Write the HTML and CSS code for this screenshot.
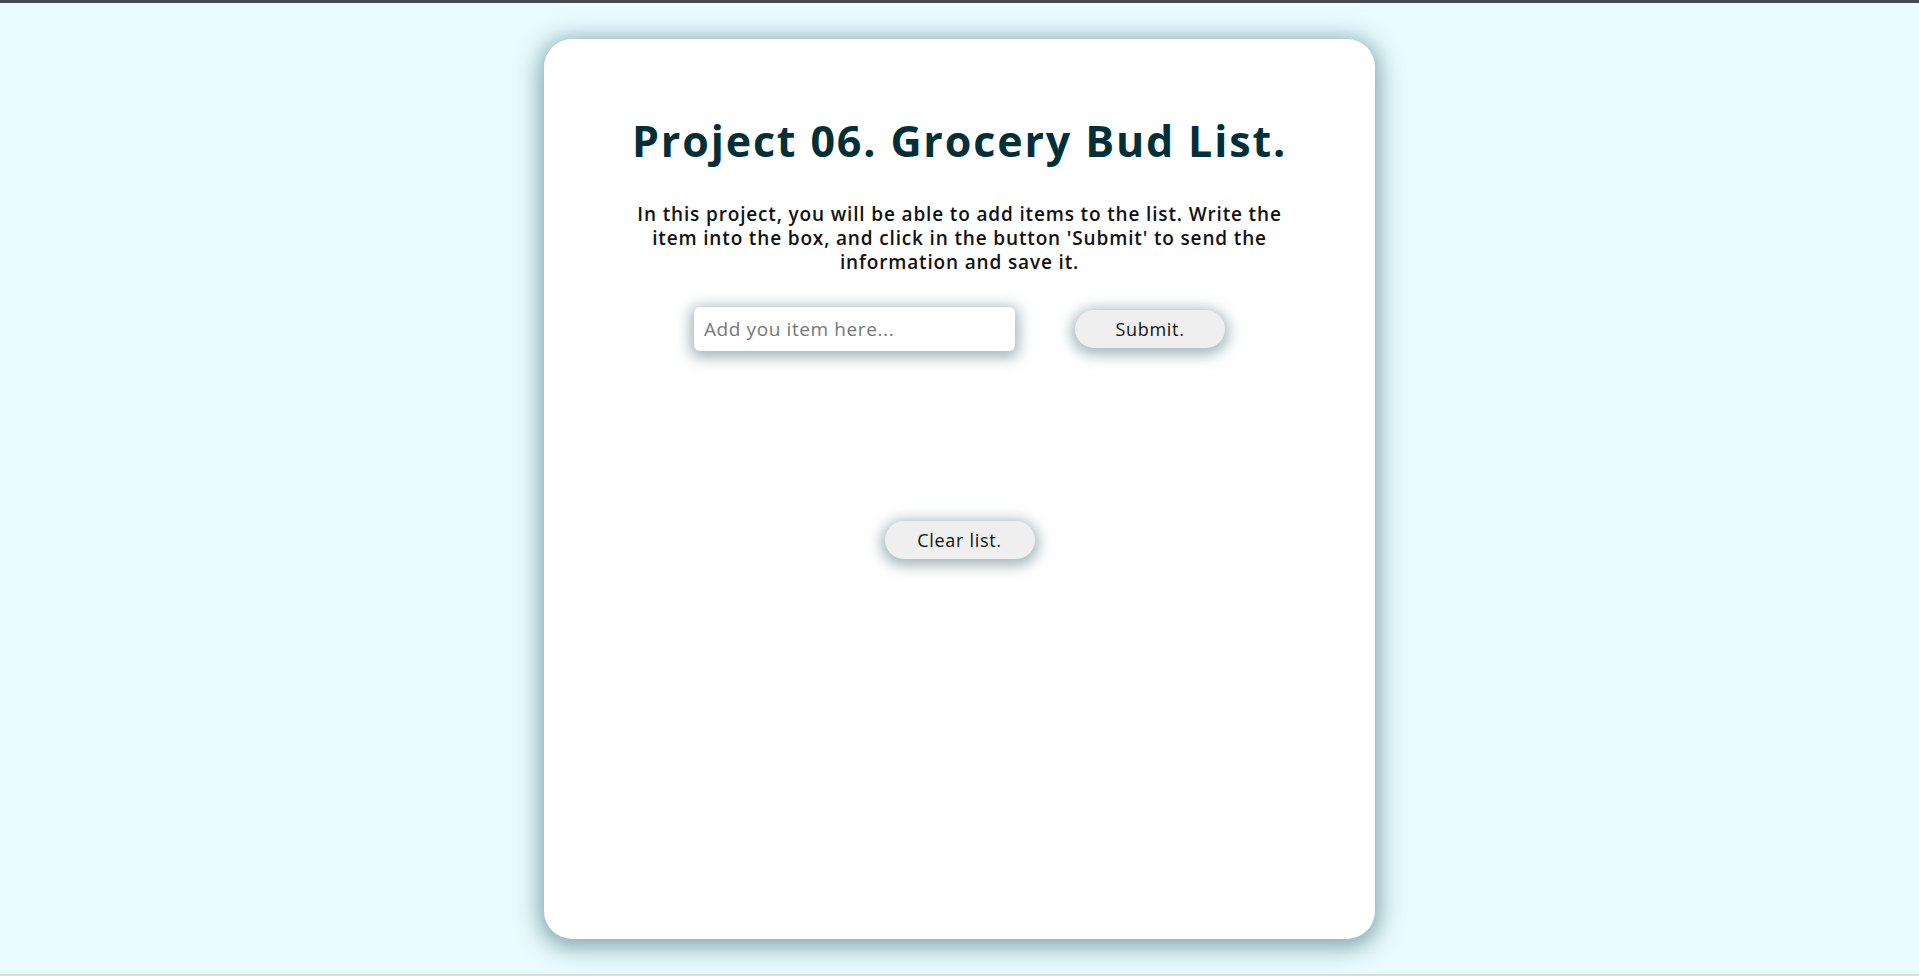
FILE: index.html
```html
<!DOCTYPE html>
<html lang="en">
<head>
<meta charset="utf-8">
<title>Grocery Bud</title>
<link rel="stylesheet" href="styles.css">
</head>
<body>
<div class="topbar"></div>
<main class="page">
  <section class="card">
    <h1 class="title">Project 06. Grocery Bud List.</h1>
    <p class="intro">In this project, you will be able to add items to the list. Write the item into the box, and click in the button 'Submit' to send the information and save it.</p>
    <form class="entry">
      <input class="entry-input" type="text" placeholder="Add you item here...">
      <button class="btn" type="button">Submit.</button>
    </form>
    <div class="list"></div>
    <button class="btn btn-clear" type="button">Clear list.</button>
  </section>
</main>
<div class="bottombar"></div>
</body>
</html>
```

FILE: styles.css
```css
html, body {
  margin: 0;
  padding: 0;
}
body {
  background: #e8fbff;
  font-family: "Trebuchet MS", "Open Sans", sans-serif;
  height: 100vh;
  display: flex;
  flex-direction: column;
  overflow: hidden;
}
.topbar {
  height: 3px;
  background: #464a50;
  flex: none;
}
.bottombar {
  height: 2px;
  background: #dadde0;
  flex: none;
}
.page {
  flex: 1;
  display: flex;
  justify-content: center;
  align-items: flex-start;
  padding-top: 36px;
}
.card {
  width: 831px;
  height: 900px;
  box-sizing: border-box;
  background: #ffffff;
  border-radius: 28px;
  box-shadow: 0 4px 22px 5px rgba(70, 115, 122, 0.6);
  display: flex;
  flex-direction: column;
  align-items: center;
  padding-top: 77px;
}
.title {
  margin: 0;
  font-size: 43px;
  line-height: 50px;
  font-weight: 700;
  letter-spacing: 1.85px;
  color: #033038;
  text-align: center;
}
.intro {
  margin: 36px 0 0;
  width: 660px;
  font-size: 19px;
  line-height: 24px;
  font-weight: 600;
  letter-spacing: 0.85px;
  color: #111;
  text-align: center;
}
.entry {
  margin: 33px 0 0;
  display: flex;
  align-items: center;
  gap: 60px;
}
.entry-input {
  width: 321px;
  height: 44px;
  box-sizing: border-box;
  border: none;
  border-radius: 6px;
  padding: 0 10px;
  font-family: inherit;
  font-size: 19px;
  letter-spacing: 0.6px;
  background: #fff;
  box-shadow: 0 3px 14px 4px rgba(80, 115, 120, 0.5);
  outline: none;
}
.entry-input::placeholder {
  color: #767676;
}
.btn {
  width: 150px;
  height: 38px;
  border: none;
  border-radius: 19px;
  background: #efefef;
  font-family: inherit;
  font-size: 18px;
  letter-spacing: 0.7px;
  color: #111;
  box-shadow: 0 3px 14px 4px rgba(80, 115, 120, 0.5);
  cursor: pointer;
}
.list {
  height: 170px;
}
```
